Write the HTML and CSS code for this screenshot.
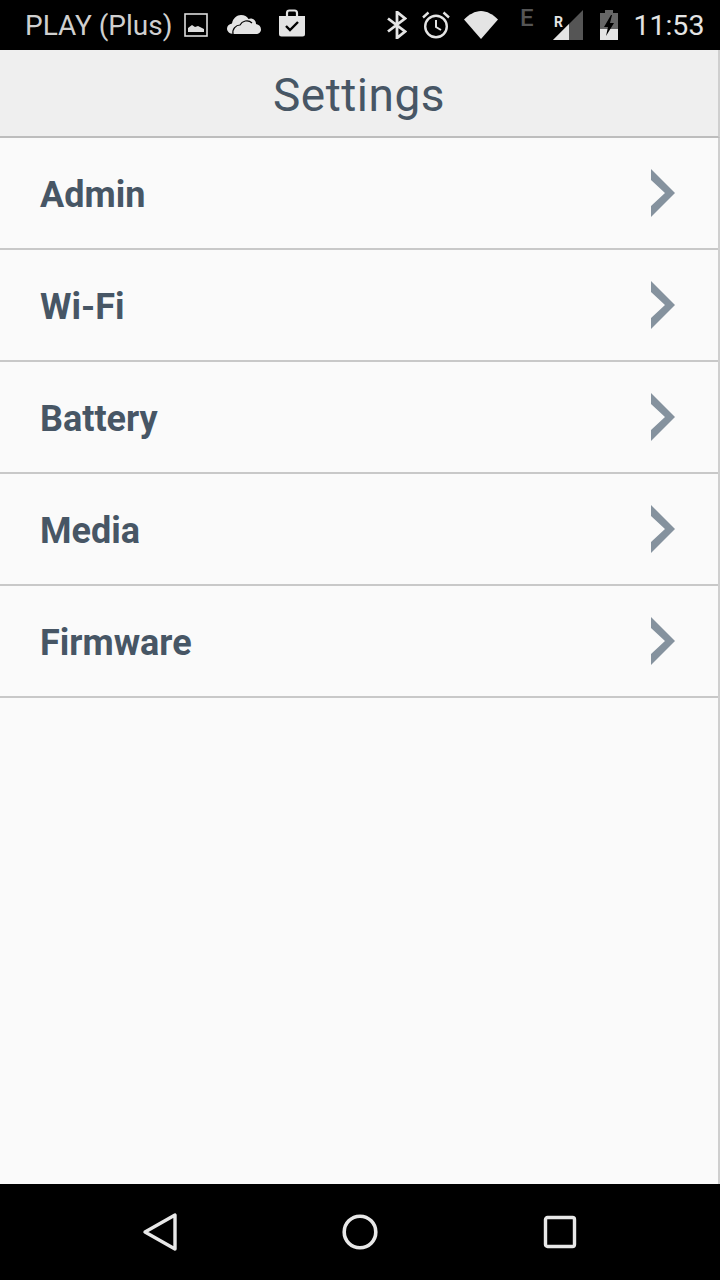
FILE: index.html
```html
<!DOCTYPE html>
<html lang="en">
<head>
    <meta charset="UTF-8">
    <meta name="viewport" content="width=device-width, initial-scale=1.0">
    <title>Settings</title>
    <link rel="stylesheet" href="styles.css">
</head>
<body>
    <div class="status-bar">
        <span class="carrier">PLAY (Plus)</span>
        <svg class="icon-picture" width="24" height="24" viewBox="0 0 24 24">
            <rect x="1" y="1" width="22" height="22" fill="none" stroke="#ddd" stroke-width="1.6"/>
            <path d="M4 19v-4l4-3 3 2 3-1 6 3v3z" fill="#ddd"/>
        </svg>
        <svg class="icon-cloud" width="34" height="22" viewBox="0 0 34 22">
            <path d="M7 20C2 20 0 17 0 14.500S2 10 5 9.500C6 4 10 1 14 1c3.500 0 6 1.500 7.500 4 1-.5 2-.7 3-.5 3 .5 4.500 3 4.500 5.500 3 .5 5 2.500 5 5.500 0 2.500-2 4.500-5 4.500z" fill="#e4e4e4"/>
            <path d="M6 20c-1-5 3-9 7-9 2-4 8-6 12-2" fill="none" stroke="#000" stroke-width="1.200"/>
        </svg>
        <svg class="icon-bag" width="28" height="28" viewBox="0 0 28 28">
            <path d="M9 7V4q0-2.500 2.500-2.500h5Q19 1.500 19 4v3" fill="none" stroke="#e4e4e4" stroke-width="2.200"/>
            <path d="M1 7h26v18q0 2.500-2.500 2.500h-21Q1 27.500 1 25z" fill="#e4e4e4"/>
            <path d="M8 17l4 4 8-8" fill="none" stroke="#000" stroke-width="2.400"/>
        </svg>

        <svg class="icon-bluetooth" width="20" height="28" viewBox="0 0 20 28">
            <path d="M1 7.500l17 13-8 6.500V1l8 6.500L1 20.500" fill="none" stroke="#e4e4e4" stroke-width="2.800"/>
        </svg>
        <svg class="icon-alarm" width="28" height="28" viewBox="0 0 28 28">
            <circle cx="14" cy="15.500" r="10.800" fill="none" stroke="#e4e4e4" stroke-width="2.400"/>
            <path d="M14 9v7l5 3" fill="none" stroke="#e4e4e4" stroke-width="2"/>
            <path d="M1 6.500L6.500 1.500M27 6.500L21.500 1.500" fill="none" stroke="#e4e4e4" stroke-width="2.400"/>
        </svg>
        <svg class="icon-wifi" width="34" height="28" viewBox="0 0 34 28">
            <path d="M0 8.500C5 3.500 11 0 17 0s12 3.500 17 8.500L17 28z" fill="#e4e4e4"/>
        </svg>
        <svg class="icon-signal" width="64" height="40" viewBox="0 -4 64 40">
            <text class="signal-type" x="0" y="17">E</text>
            <text class="signal-roaming" x="34" y="18">R</text>
            <path d="M33 31L63 1v30z" fill="#555"/>
            <path d="M33 31l16-16v16z" fill="#e4e4e4"/>
        </svg>
        <svg class="icon-battery" width="20" height="30" viewBox="0 0 20 30">
            <path d="M6 0h8v3h5v27H1V3h5z" fill="#666"/>
            <path d="M1 19h18v11H1z" fill="#e4e4e4"/>
            <path d="M12 5L5 17h4l-2 9 8-13h-4l2-8z" fill="#000"/>
        </svg>
        <span class="clock">11:53</span>
    </div>

    <header class="title-bar">
        <h1>Settings</h1>
    </header>

    <main class="settings-list">
        <a class="settings-row">
            <span>Admin</span>
            <svg class="chevron" width="26" height="48" viewBox="0 0 26 48"><path d="M1 0l24 24L1 48V37l14-13L1 11z"/></svg>
        </a>
        <a class="settings-row">
            <span>Wi-Fi</span>
            <svg class="chevron" width="26" height="48" viewBox="0 0 26 48"><path d="M1 0l24 24L1 48V37l14-13L1 11z"/></svg>
        </a>
        <a class="settings-row">
            <span>Battery</span>
            <svg class="chevron" width="26" height="48" viewBox="0 0 26 48"><path d="M1 0l24 24L1 48V37l14-13L1 11z"/></svg>
        </a>
        <a class="settings-row">
            <span>Media</span>
            <svg class="chevron" width="26" height="48" viewBox="0 0 26 48"><path d="M1 0l24 24L1 48V37l14-13L1 11z"/></svg>
        </a>
        <a class="settings-row">
            <span>Firmware</span>
            <svg class="chevron" width="26" height="48" viewBox="0 0 26 48"><path d="M1 0l24 24L1 48V37l14-13L1 11z"/></svg>
        </a>
    </main>

    <nav class="nav-bar">
        <svg width="40" height="40" viewBox="0 0 40 40">
            <path d="M5 20L35 3v34z" fill="none" stroke="#e8e8e8" stroke-width="3.400" stroke-linejoin="round"/>
        </svg>
        <svg width="40" height="40" viewBox="0 0 40 40">
            <circle cx="20" cy="20" r="15.800" fill="none" stroke="#e8e8e8" stroke-width="3.600"/>
        </svg>
        <svg width="40" height="40" viewBox="0 0 40 40">
            <rect x="5.500" y="5.500" width="29" height="29" rx="2" fill="none" stroke="#e8e8e8" stroke-width="3.400"/>
        </svg>
    </nav>
</body>
</html>
```

FILE: styles.css
```css
* {
    box-sizing: border-box;
}

html, body {
    height: 100%;
}

body {
    margin: 0;
    display: flex;
    flex-direction: column;
    font-family: Roboto, "Liberation Sans", sans-serif;
    color: #475665;
    background-color: #fafafa;
}

.status-bar {
    height: 50px;
    flex: none;
    display: flex;
    align-items: center;
    padding-left: 25px;
    color: #cfcfcf;
    background-color: #000;
}

.carrier {
    font-size: 28px;
    margin-top: 1px;
}

.clock {
    font-size: 28.5px;
    margin-left: 14px;
    margin-top: 1px;
    color: #e4e4e4;
}

.icon-picture { margin-left: 12px; }
.icon-cloud   { margin-left: 19px; }
.icon-bag     { margin-left: 17px; margin-top: -4px; }
.icon-bluetooth { margin-left: 81px; }
.icon-alarm   { margin-left: 15px; }
.icon-wifi    { margin-left: 14px; }
.icon-signal  { margin-left: 22px; }
.icon-battery { margin-left: 15px; }

.signal-type {
    font-size: 24px;
    font-weight: 500;
    fill: #555;
}

.signal-roaming {
    font-size: 14px;
    font-weight: 700;
    fill: #e4e4e4;
}

.title-bar {
    height: 88px;
    flex: none;
    display: flex;
    align-items: center;
    justify-content: center;
    padding-top: 4px;
    background-color: #efefef;
    border-bottom: 2px solid #bdbdbd;
    border-right: 2px solid #cfcfcf;
}

.title-bar h1 {
    margin: 0;
    font-size: 46px;
    font-weight: 400;
    letter-spacing: 0.5px;
}

.settings-list {
    flex: 1;
    border-right: 2px solid #cfcfcf;
}

.settings-row {
    height: 112px;
    display: flex;
    align-items: center;
    justify-content: space-between;
    padding: 0 42px 0 40px;
    border-bottom: 2px solid #c8c8c8;
    font-size: 36px;
    font-weight: 700;
}

.settings-row span {
    margin-top: 3px;
}

.chevron {
    fill: #85929e;
}

.nav-bar {
    height: 96px;
    flex: none;
    display: flex;
    align-items: center;
    justify-content: space-between;
    padding: 0 140px;
    background-color: #000;
}
```
